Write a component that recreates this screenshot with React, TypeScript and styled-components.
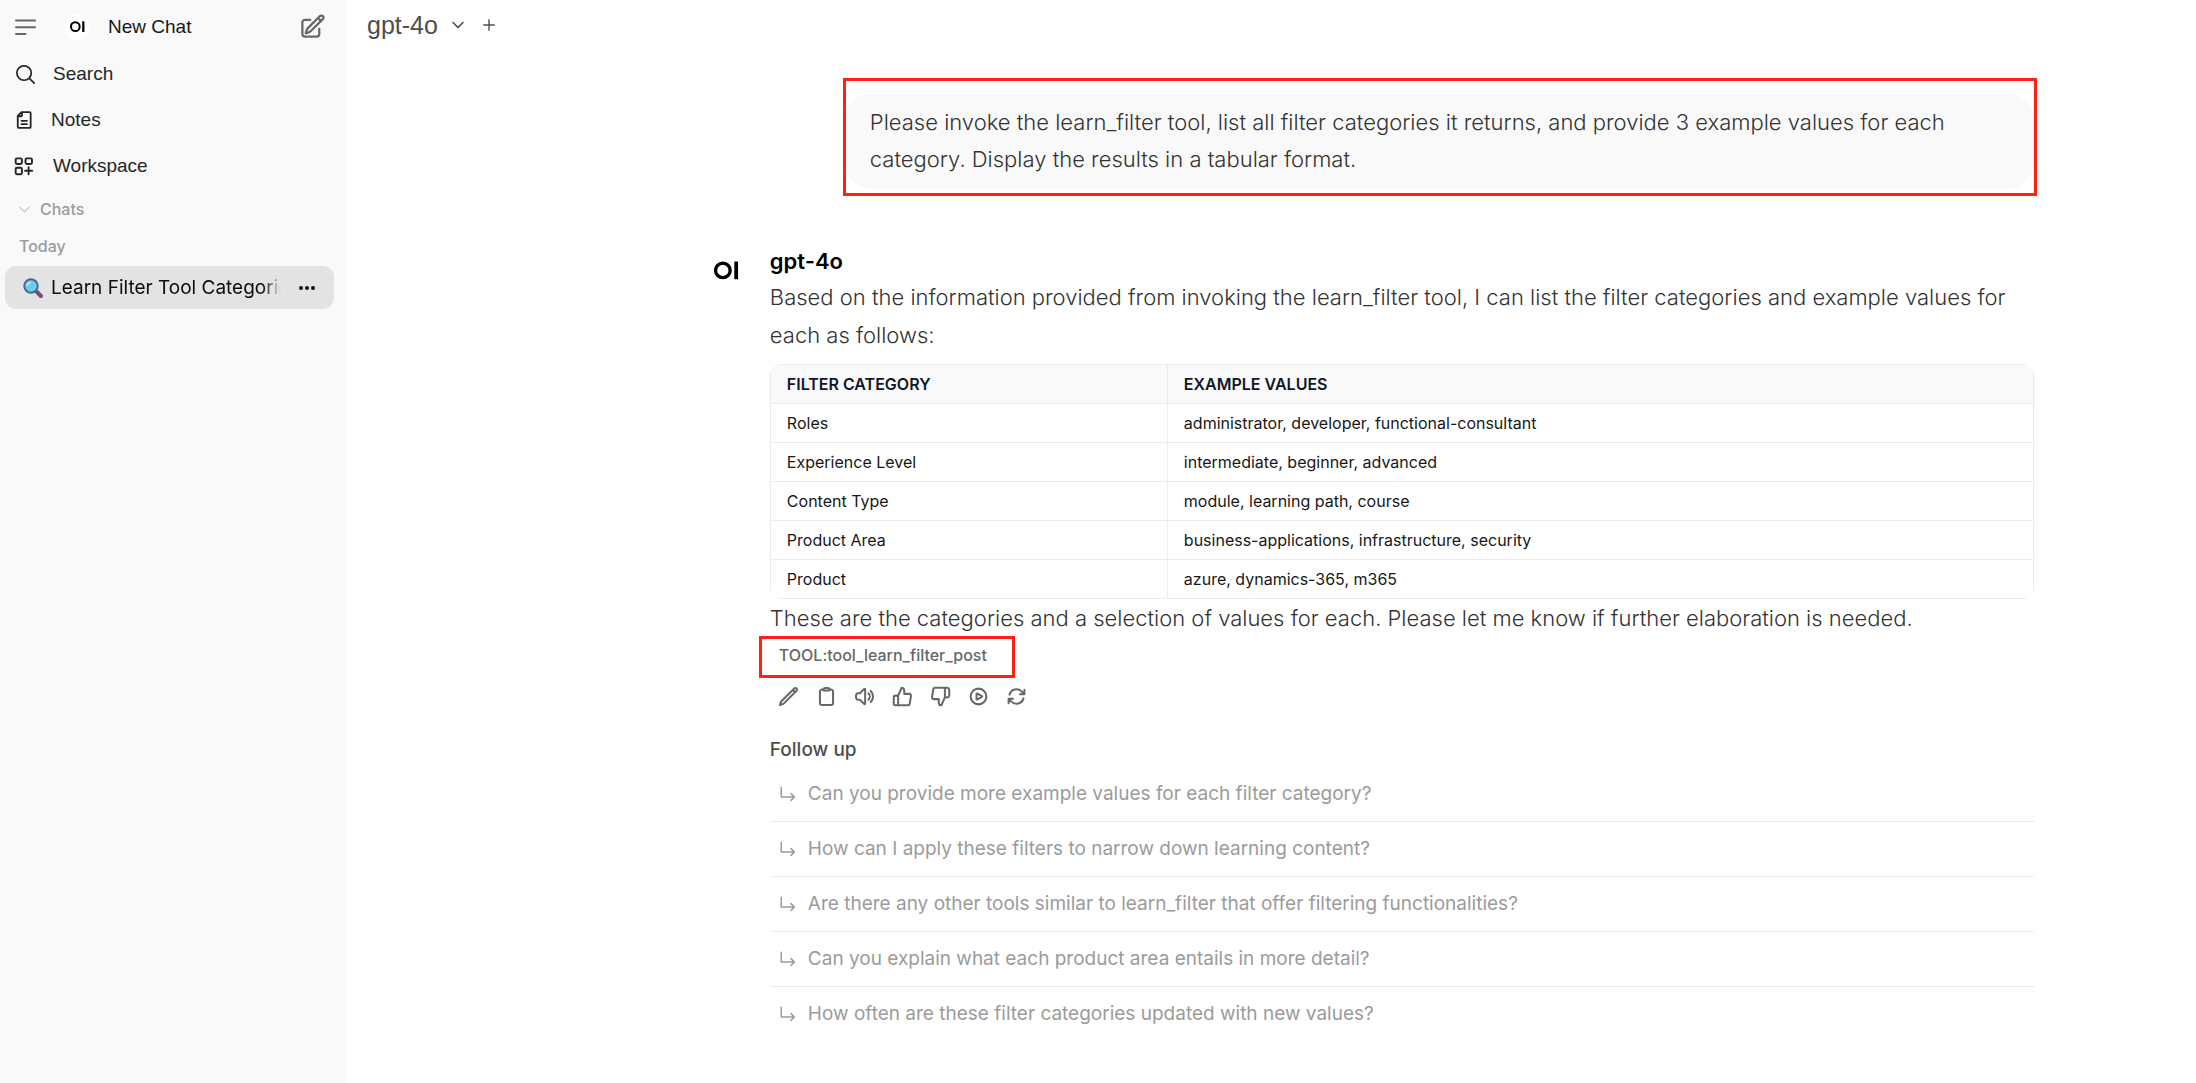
import React from "react";
import styled, { createGlobalStyle } from "styled-components";

const GlobalStyle = createGlobalStyle`
  *, *::before, *::after { box-sizing: border-box; }
  html, body { margin: 0; background: #ffffff; }
  body { font-family: Inter, "Liberation Sans", sans-serif; color: #4e4e4e; }
  button { font: inherit; color: inherit; background: none; border: 0; margin: 0; padding: 0; cursor: pointer; text-align: left; }
  h2, p, ul { margin: 0; padding: 0; }
  svg { flex: none; }
`;

const uiFont = `"Liberation Sans", Arial, sans-serif`;

const Shell = styled.div`
  display: flex;
  min-height: 100vh;
`;

const Sidebar = styled.nav`
  width: 345px;
  flex: none;
  background: #f9f9f9;
`;

const SidebarHeader = styled.div`
  display: flex;
  align-items: center;
  height: 51px;
  padding: 2px 19px 0 13px;
`;

const IconButton = styled.button`
  display: flex;
  align-items: center;
  justify-content: center;
  flex: none;
  color: #676767;
`;

const NewChat = styled.button`
  display: flex;
  align-items: center;
  flex: 1;
  gap: 18px;
  margin-left: 27px;
  font: 19px/26px ${uiFont};
  color: #171717;
`;

const LogoBadge = styled.span`
  display: flex;
  align-items: center;
  justify-content: center;
  width: 26px;
  height: 26px;
  border-radius: 50%;
  background: #ffffff;
`;

const NavButton = styled.button<{ $gap: number }>`
  display: flex;
  align-items: center;
  gap: ${(p) => p.$gap}px;
  width: 100%;
  height: 46px;
  padding-left: 14px;
  font: 19px/26px ${uiFont};
  color: #262626;
`;

const SectionToggle = styled.button`
  display: flex;
  align-items: center;
  gap: 8px;
  width: 100%;
  height: 40px;
  padding-left: 17px;
  font-size: 16px;
  font-weight: 500;
  line-height: 24px;
  color: #9b9b9b;
  svg { color: #c4c4c4; }
`;

const DayLabel = styled.div`
  height: 37px;
  padding: 5px 19px;
  font-size: 16px;
  font-weight: 500;
  line-height: 24px;
  color: #9b9b9b;
`;

const ChatRow = styled.div`
  display: flex;
  align-items: center;
  gap: 17px;
  height: 43px;
  margin: 0 11px 0 5px;
  padding: 0 18px;
  border-radius: 11px;
  background: #e3e3e3;
  color: #0d0d0d;
`;

const ChatTitle = styled.button`
  display: flex;
  align-items: center;
  flex: 1;
  min-width: 0;
  gap: 8px;
  overflow: hidden;
  white-space: nowrap;
  font-size: 19px;
  line-height: 28px;
  mask-image: linear-gradient(to right, #000 93%, transparent 100%);
`;

const Main = styled.main`
  flex: 1;
  min-width: 0;
`;

const TopBar = styled.header`
  display: flex;
  align-items: center;
  height: 50px;
  padding-left: 22px;
`;

const ModelButton = styled.button`
  display: flex;
  align-items: center;
  gap: 12px;
  font: 25px/32px ${uiFont};
  color: #4e4e4e;
`;

const AddModel = styled(IconButton)`
  margin-left: 16px;
  color: #4e4e4e;
`;

const Thread = styled.div`
  display: grid;
  grid-template-columns: 9fr minmax(0, 1324px) 4fr;
`;

const Messages = styled.div`
  grid-column: 2;
  padding-top: 43px;
`;

const UserRow = styled.div`
  display: flex;
  justify-content: flex-end;
`;

const Marked = styled.div<{ $inset: string }>`
  position: relative;
  &::after {
    content: "";
    position: absolute;
    inset: ${(p) => p.$inset};
    border: 3px solid #ff1f14;
    pointer-events: none;
  }
`;

const Bubble = styled.p`
  max-width: 1190px;
  padding: 11px 26px;
  border-radius: 28px;
  background: #f9f9f9;
  font-size: 22px;
  font-weight: 300;
  line-height: 37px;
  color: #333333;
`;

const Reply = styled.article`
  display: flex;
  gap: 31px;
  margin-top: 56px;
`;

const Avatar = styled.div`
  display: flex;
  flex: none;
  width: 29px;
  padding: 16px 0 0 4px;
`;

const ReplyBody = styled.div`
  flex: 1;
  min-width: 0;
`;

const ModelName = styled.h2`
  font-size: 22px;
  font-weight: 600;
  line-height: 33px;
  color: #000000;
`;

const Paragraph = styled.p`
  font-size: 22px;
  font-weight: 300;
  line-height: 38px;
  color: #333333;
`;

const TableFrame = styled.div`
  margin-top: 10px;
  overflow: hidden;
  border-radius: 11px;
`;

const Table = styled.table`
  width: 100%;
  border-collapse: collapse;
  font-size: 16px;
  line-height: 24px;
  color: #171717;
  th, td {
    height: 39px;
    padding: 0 16px;
    text-align: left;
    border: 1px solid #ececec;
  }
  th:first-child, td:first-child { width: 397px; }
  th { background: #f9f9f9; font-weight: 600; color: #0f172a; }
`;

const SourceRow = styled.div`
  display: flex;
  padding: 5px 9px 6px;
`;

const SourceButton = styled.button`
  display: block;
  font-size: 16px;
  font-weight: 500;
  line-height: 26px;
  color: #676767;
`;

const Actions = styled.div`
  display: flex;
  gap: 17px;
  padding: 12px 8px;
`;

const FollowTitle = styled.h2`
  padding-top: 17px;
  font-size: 19px;
  font-weight: 500;
  line-height: 28px;
  color: #4e4e4e;
`;

const FollowList = styled.ul`
  list-style: none;
  padding-top: 3px;
`;

const FollowItem = styled.li`
  border-bottom: 1px solid #ececec;
  &:last-child { border-bottom: 0; }
`;

const FollowButton = styled.button`
  display: flex;
  align-items: center;
  gap: 11px;
  width: 100%;
  height: 54px;
  padding-left: 9px;
  font-size: 19px;
  line-height: 28px;
  color: #9b9b9b;
`;

type IconProps = { d: string[]; size: number; stroke?: number };

const Icon = ({ d, size, stroke = 2 }: IconProps) => (
  <svg width={size} height={size} viewBox="0 0 24 24" fill="none" stroke="currentColor" strokeWidth={stroke} strokeLinecap="round" strokeLinejoin="round" aria-hidden="true">
    {d.map((p) => <path key={p} d={p} />)}
  </svg>
);

const Logo = ({ width }: { width: number }) => (
  <svg width={width} height={(width * 18) / 24} viewBox="0 0 24 18" aria-hidden="true">
    <circle cx="8.5" cy="9" r="7" fill="none" stroke="#000" strokeWidth="3.2" />
    <rect x="19.5" y="0.5" width="3.6" height="17" fill="#000" />
  </svg>
);

const Magnifier = () => (
  <svg width="20" height="20" viewBox="0 0 19 19" aria-hidden="true">
    <path d="M12 12l5 5" stroke="#7d4a80" strokeWidth="4" strokeLinecap="round" />
    <circle cx="7.6" cy="7.6" r="6.4" fill="#6bcdea" stroke="#4d6596" strokeWidth="1.8" />
    <path d="M4 7a4 4 0 0 1 3-3" stroke="#b4ecfa" strokeWidth="1.5" fill="none" strokeLinecap="round" />
  </svg>
);

const icons = {
  menu: ["M3 5.500h19M3 12.300h19M3 19h9.500"],
  edit: ["m16.862 4.487 1.687-1.688a1.875 1.875 0 1 1 2.652 2.652L10.582 16.07a4.5 4.5 0 0 1-1.897 1.13L6 18l.8-2.685a4.5 4.5 0 0 1 1.13-1.897l8.932-8.931Zm0 0L19.5 7.125M18 14v4.75A2.25 2.25 0 0 1 15.75 21H5.25A2.25 2.25 0 0 1 3 18.75V8.25A2.25 2.25 0 0 1 5.25 6H10"],
  search: ["m21 21-5.197-5.197m0 0A7.5 7.5 0 1 0 5.196 5.196a7.5 7.5 0 0 0 10.607 10.607Z"],
  chevron: ["m19.5 8.25-7.5 7.5-7.5-7.5"],
  plus: ["M12 3v18M3 12h18"],
  pencil: ["m16.862 4.487 1.687-1.688a1.875 1.875 0 1 1 2.652 2.652L6.832 19.82a4.5 4.5 0 0 1-1.897 1.13l-2.685.8.8-2.685a4.5 4.5 0 0 1 1.13-1.897L16.863 4.487Zm0 0L19.5 7.125"],
  clipboard: ["M15.666 3.888A2.25 2.25 0 0 0 13.5 2.25h-3c-1.03 0-1.9.693-2.166 1.638m7.332 0c.055.194.084.4.084.612v0a.75.75 0 0 1-.75.75H9a.75.75 0 0 1-.75-.75v0c0-.212.03-.418.084-.612m7.332 0c.646.049 1.288.11 1.927.184 1.1.128 1.907 1.077 1.907 2.185V19.5a2.25 2.25 0 0 1-2.25 2.25H6.75A2.25 2.25 0 0 1 4.5 19.5V6.257c0-1.108.806-2.057 1.907-2.185a48.208 48.208 0 0 1 1.927-.184"],
  speaker: ["M19.114 5.636a9 9 0 0 1 0 12.728M16.463 8.288a5.25 5.25 0 0 1 0 7.424M6.75 8.25l4.72-4.72a.75.75 0 0 1 1.28.53v15.88a.75.75 0 0 1-1.28.53l-4.72-4.72H4.51c-.88 0-1.704-.507-1.938-1.354A9.01 9.01 0 0 1 2.25 12c0-.83.112-1.633.322-2.396C2.806 8.756 3.63 8.25 4.51 8.25H6.75Z"],
  up: ["M14 9V5a3 3 0 0 0-3-3l-4 9v11h11.28a2 2 0 0 0 2-1.7l1.38-9a2 2 0 0 0-2-2.3zM7 22H4a2 2 0 0 1-2-2v-7a2 2 0 0 1 2-2h3"],
  down: ["M10 15v4a3 3 0 0 0 3 3l4-9V2H5.72a2 2 0 0 0-2 1.7l-1.38 9a2 2 0 0 0 2 2.3zm7-13h2.67A2.31 2.31 0 0 1 22 4v7a2.31 2.31 0 0 1-2.33 2H17"],
  play: ["M21 12a9 9 0 1 1-18 0 9 9 0 0 1 18 0Z", "M15.91 11.672a.375.375 0 0 1 0 .656l-5.603 3.113a.375.375 0 0 1-.557-.328V8.887c0-.286.307-.466.557-.327l5.603 3.112Z"],
  refresh: ["M16.023 9.348h4.992v-.001M2.985 19.644v-4.992m0 0h4.992m-4.993 0 3.181 3.183a8.25 8.25 0 0 0 13.803-3.7M4.031 9.865a8.25 8.25 0 0 1 13.803-3.7l3.181 3.182m0-4.991v4.99"],
  workspace: ["M3.800 2.800h3.900a1.800 1.800 0 0 1 1.800 1.800v3.100a1.800 1.800 0 0 1-1.800 1.800H3.800A1.800 1.800 0 0 1 2 7.700V4.600A1.800 1.800 0 0 1 3.800 2.800ZM15.600 2.800h4.200A1.800 1.800 0 0 1 21.600 4.600v3.100a1.800 1.800 0 0 1-1.800 1.800h-4.200a1.800 1.800 0 0 1-1.800-1.800V4.600a1.800 1.800 0 0 1 1.800-1.800ZM3.800 14h3.900a1.800 1.800 0 0 1 1.800 1.800V20a1.800 1.800 0 0 1-1.800 1.800H3.800A1.800 1.800 0 0 1 2 20v-4.200A1.800 1.800 0 0 1 3.800 14ZM17.500 13.500v8.500M13.300 17.700h8.500"],
  doc: ["M4.500 7 9 2.500h9.500a1.500 1.500 0 0 1 1.500 1.500v16a1.500 1.500 0 0 1-1.500 1.500H6a1.500 1.500 0 0 1-1.500-1.500V7ZM9.500 3v3.700a.8.8 0 0 1-.8.8H5M9 13h6.500M9 17h6.500"],
  follow: ["M3 3v13h17.500M16 11.500l4.500 4.500-4.500 4.500"],
};

const actions: [string, string[]][] = [
  ["Edit", icons.pencil],
  ["Copy", icons.clipboard],
  ["Read aloud", icons.speaker],
  ["Good response", icons.up],
  ["Bad response", icons.down],
  ["Continue response", icons.play],
  ["Regenerate", icons.refresh],
];

const rows = [
  ["Roles", "administrator, developer, functional-consultant"],
  ["Experience Level", "intermediate, beginner, advanced"],
  ["Content Type", "module, learning path, course"],
  ["Product Area", "business-applications, infrastructure, security"],
  ["Product", "azure, dynamics-365, m365"],
];

const followUps = [
  "Can you provide more example values for each filter category?",
  "How can I apply these filters to narrow down learning content?",
  "Are there any other tools similar to learn_filter that offer filtering functionalities?",
  "Can you explain what each product area entails in more detail?",
  "How often are these filter categories updated with new values?",
];

export default function App() {
  return (
    <Shell>
      <GlobalStyle />
      <Sidebar>
        <SidebarHeader>
          <IconButton aria-label="Toggle sidebar"><Icon d={icons.menu} size={24} /></IconButton>
          <NewChat><LogoBadge><Logo width={15} /></LogoBadge>New Chat</NewChat>
          <IconButton aria-label="Start a new chat"><Icon d={icons.edit} size={27} /></IconButton>
        </SidebarHeader>
        <NavButton $gap={16}><Icon d={icons.search} size={23} stroke={1.8} />Search</NavButton>
        <NavButton $gap={17}><Icon d={icons.doc} size={20} stroke={2.2} />Notes</NavButton>
        <NavButton $gap={19}><Icon d={icons.workspace} size={20} stroke={2.3} />Workspace</NavButton>
        <SectionToggle><Icon d={icons.chevron} size={15} />Chats</SectionToggle>
        <DayLabel>Today</DayLabel>
        <ChatRow>
          <ChatTitle><Magnifier />Learn Filter Tool Categories</ChatTitle>
          <IconButton aria-label="Chat menu">
            <svg width="18" height="6" viewBox="0 0 18 6" fill="#0d0d0d" aria-hidden="true">
              <circle cx="3" cy="3" r="2" /><circle cx="9" cy="3" r="2" /><circle cx="15" cy="3" r="2" />
            </svg>
          </IconButton>
        </ChatRow>
      </Sidebar>
      <Main>
        <TopBar>
          <ModelButton>gpt-4o<Icon d={icons.chevron} size={16} stroke={2.4} /></ModelButton>
          <AddModel aria-label="Add model"><Icon d={icons.plus} size={14} stroke={2.4} /></AddModel>
        </TopBar>
        <Thread>
          <Messages>
            <UserRow>
              <Marked $inset="-15px -3px -7px -1px">
                <Bubble>
                  Please invoke the learn_filter tool, list all filter categories it returns, and provide 3 example values for each category. Display the results in a tabular format.
                </Bubble>
              </Marked>
            </UserRow>
            <Reply>
              <Avatar><Logo width={25} /></Avatar>
              <ReplyBody>
                <ModelName>gpt-4o</ModelName>
                <Paragraph>
                  Based on the information provided from invoking the learn_filter tool, I can list the filter categories and example values for each as follows:
                </Paragraph>
                <TableFrame>
                  <Table>
                    <thead>
                      <tr><th scope="col">FILTER CATEGORY</th><th scope="col">EXAMPLE VALUES</th></tr>
                    </thead>
                    <tbody>
                      {rows.map(([name, values]) => (
                        <tr key={name}><td>{name}</td><td>{values}</td></tr>
                      ))}
                    </tbody>
                  </Table>
                </TableFrame>
                <Paragraph>
                  These are the categories and a selection of values for each. Please let me know if further elaboration is needed.
                </Paragraph>
                <SourceRow>
                  <Marked $inset="-6px -28px -10px -20px">
                    <SourceButton>TOOL:tool_learn_filter_post</SourceButton>
                  </Marked>
                </SourceRow>
                <Actions>
                  {actions.map(([label, d]) => (
                    <IconButton key={label} aria-label={label}><Icon d={d} size={21} stroke={2.3} /></IconButton>
                  ))}
                </Actions>
                <FollowTitle>Follow up</FollowTitle>
                <FollowList>
                  {followUps.map((q) => (
                    <FollowItem key={q}>
                      <FollowButton><Icon d={icons.follow} size={18} />{q}</FollowButton>
                    </FollowItem>
                  ))}
                </FollowList>
              </ReplyBody>
            </Reply>
          </Messages>
        </Thread>
      </Main>
    </Shell>
  );
}
